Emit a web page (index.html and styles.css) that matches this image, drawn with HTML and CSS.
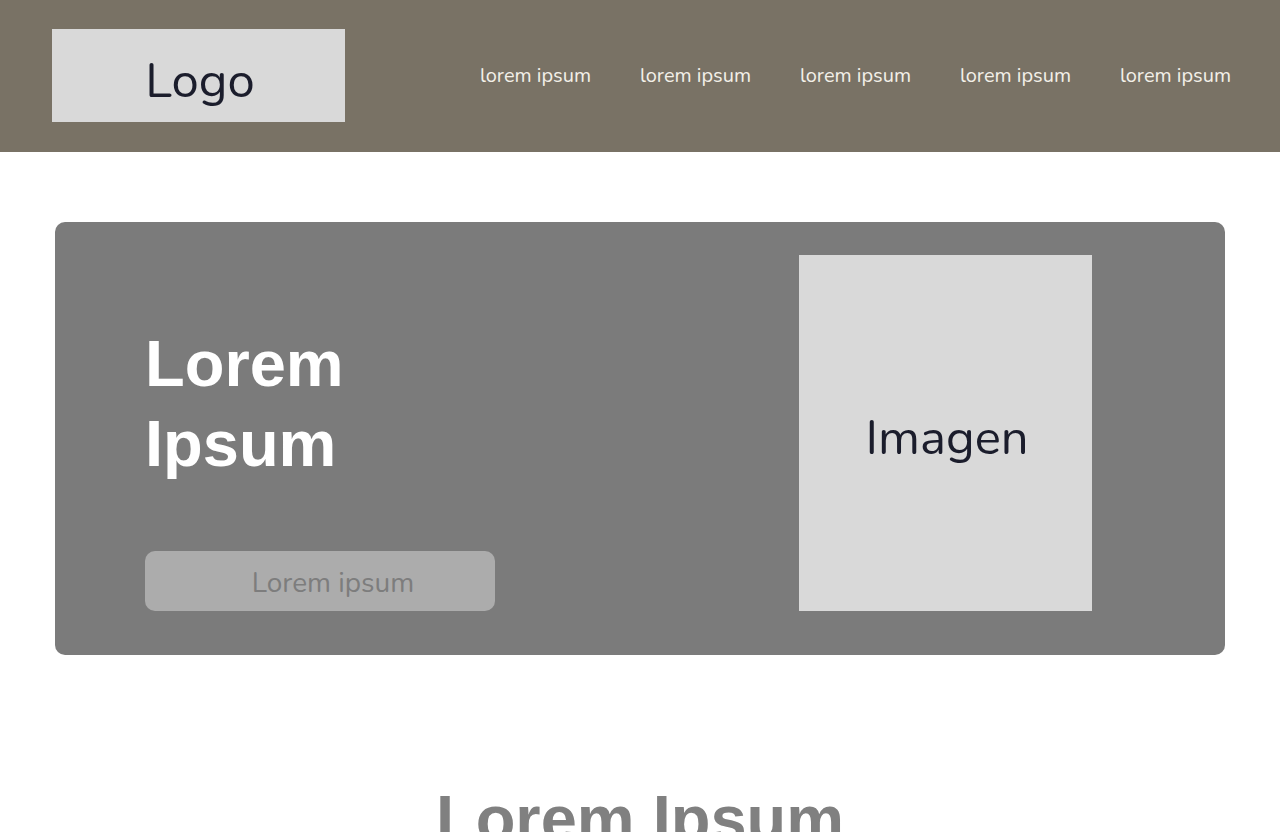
FILE: index.html
```html
<!DOCTYPE html>
<html lang="es">
<head>
<meta charset="utf-8">
<title>Lorem Ipsum</title>
<link rel="stylesheet" href="styles.css">
</head>
<body>
<header class="header">
  <div class="logo">Logo</div>
  <nav class="nav">
    <a href="#">lorem ipsum</a>
    <a href="#">lorem ipsum</a>
    <a href="#">lorem ipsum</a>
    <a href="#">lorem ipsum</a>
    <a href="#">lorem ipsum</a>
  </nav>
</header>
<main class="main">
  <section class="hero">
    <div class="hero-text">
      <h1 class="hero-title">Lorem<br>Ipsum</h1>
      <button class="hero-btn">Lorem ipsum</button>
    </div>
    <div class="hero-image">Imagen</div>
  </section>
  <section class="second">
    <h2 class="second-title">Lorem Ipsum</h2>
  </section>
</main>
</body>
</html>
```
FILE: styles.css
```css
* { box-sizing: border-box; }
html, body { margin: 0; padding: 0; }
body {
  background: #ffffff;
  font-family: "Nunito", "Lato", sans-serif;
  overflow: hidden;
  height: 832px;
}
.header {
  height: 152px;
  background: #797265;
  display: flex;
  align-items: center;
  justify-content: space-between;
  padding: 0 48px 0 52px;
}
.logo {
  width: 293px;
  height: 93px;
  margin-top: -1px;
  background: #d9d9d9;
  color: #1b1d2c;
  font-size: 49px;
  display: flex;
  align-items: center;
  justify-content: center;
  padding: 10px 0 0 3px;
}
.nav {
  display: flex;
  gap: 47px;
  margin-bottom: 2px;
}
.nav a {
  color: #f2efe8;
  text-decoration: none;
  font-size: 20px;
  width: 113px;
  text-align: center;
  white-space: nowrap;
}
.main {
  padding: 70px 55px 0;
}
.hero {
  background: #7b7b7b;
  border-radius: 10px;
  height: 433px;
  display: flex;
  justify-content: space-between;
  padding: 33px 133px 44px 90px;
}
.hero-text {
  display: flex;
  flex-direction: column;
  justify-content: space-between;
  padding-top: 69px;
}
.hero-title {
  margin: 0;
  font-family: "Liberation Sans", Arial, sans-serif;
  font-weight: 700;
  font-size: 65px;
  line-height: 80px;
  color: #ffffff;
}
.hero-btn {
  width: 350px;
  height: 60px;
  border: none;
  border-radius: 10px;
  background: #acacac;
  color: #7d7d7d;
  font-family: "Nunito", "Lato", sans-serif;
  font-size: 28px;
  padding: 4px 0 0 26px;
  cursor: pointer;
}
.hero-image {
  width: 293px;
  height: 356px;
  background: #d9d9d9;
  color: #1b1d2c;
  font-size: 49px;
  display: flex;
  align-items: center;
  justify-content: center;
  padding: 8px 0 0 3px;
}
.second {
  padding-top: 124px;
  text-align: center;
}
.second-title {
  margin: 0;
  font-family: "Liberation Sans", Arial, sans-serif;
  font-weight: 700;
  font-size: 65px;
  line-height: 80px;
  color: #808080;
}
```
